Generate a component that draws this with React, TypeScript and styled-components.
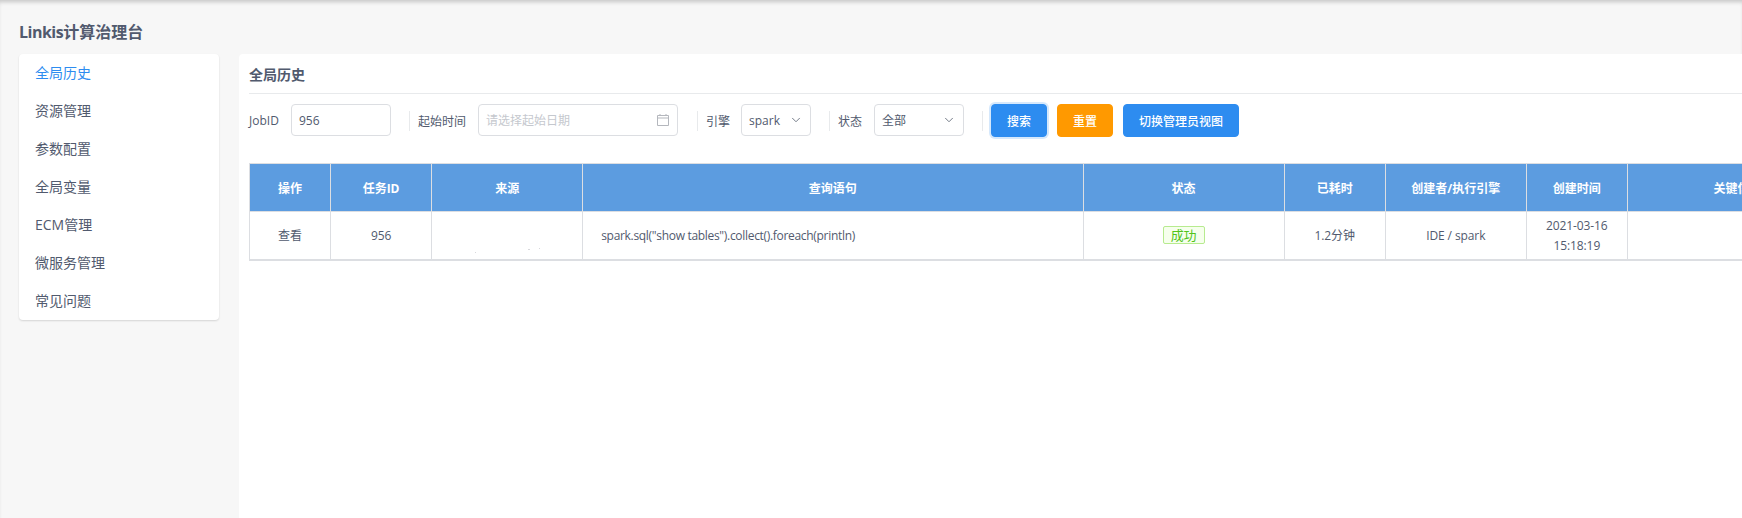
import React from "react";
import styled, { createGlobalStyle } from "styled-components";
import { ChevronDown } from "lucide-react";

const Global = createGlobalStyle`
  html, body { margin: 0; padding: 0; height: 100%; overflow: hidden; background: #f7f7f7; }
  body { font-family: "Open Sans", "Noto Sans CJK SC", sans-serif; color: #515a6e; font-size: 12px; }
  #root { height: 100%; }
`;

const Page = styled.div`
  width: 1742px;
  height: 518px;
  overflow: hidden;
  position: relative;
  background: #f7f7f7;
  box-shadow: inset 0 4px 4px -2px rgba(0, 0, 0, 0.2);
  padding: 22px 0 0 19px;
  box-sizing: border-box;
`;
const Title = styled.h1`
  margin: 0;
  height: 20px;
  line-height: 20px;
  font-size: 16px;
  font-weight: 700;
  color: #515a6e;
`;
const TitleLatin = styled.span`
  letter-spacing: -0.5px;
`;
const Body = styled.div`
  display: flex;
  align-items: flex-start;
  gap: 20px;
  margin-top: 12px;
`;
const Side = styled.nav`
  width: 200px;
  flex: none;
  background: #fff;
  border-radius: 4px;
  box-shadow: 0 1px 2px rgba(0, 0, 0, 0.14);
  display: flex;
  flex-direction: column;
`;
const SideItem = styled.a<{ $active?: boolean }>`
  display: block;
  height: 38px;
  line-height: 38px;
  padding-left: 16px;
  font-size: 14px;
  color: ${(p) => (p.$active ? "#2d8cf0" : "#515a6e")};
`;
const Panel = styled.main`
  flex: 1;
  height: 470px;
  background: #fff;
  border-radius: 4px 0 0 0;
  padding: 0 0 0 10px;
  min-width: 0;
`;
const Heading = styled.h2`
  margin: 0;
  height: 39px;
  line-height: 41px;
  font-size: 14px;
  font-weight: 700;
  color: #515a6e;
  border-bottom: 1px solid #e8eaec;
`;
const Form = styled.form`
  display: flex;
  align-items: center;
  margin-top: 10px;
  height: 33px;
`;
const Label = styled.label<{ $w: number }>`
  width: ${(p) => p.$w}px;
  flex: none;
  font-size: 12px;
  color: #515a6e;
`;
const Input = styled.div<{ $w: number }>`
  width: ${(p) => p.$w}px;
  height: 32px;
  align-self: flex-start;
  flex: none;
  box-sizing: border-box;
  border: 1px solid #dcdee2;
  border-radius: 4px;
  padding: 0 7px;
  display: flex;
  align-items: center;
  justify-content: space-between;
  color: #515a6e;
  font-size: 12px;
`;
const Placeholder = styled.span`
  color: #c5c8ce;
`;
const Sep = styled.i<{ $l: number; $r: number }>`
  flex: none;
  width: 1px;
  height: 20px;
  background: #e8eaec;
  margin: 0 ${(p) => p.$r}px 0 ${(p) => p.$l}px;
`;
const Btn = styled.button<{ $bg: string; $w: number; $ring?: boolean; $ml: number }>`
  flex: none;
  width: ${(p) => p.$w}px;
  height: 33px;
  margin-left: ${(p) => p.$ml}px;
  padding: 0;
  border: 1px solid ${(p) => p.$bg};
  border-radius: 4px;
  background: ${(p) => p.$bg};
  color: #fff;
  font: inherit;
  font-size: 12px;
  font-weight: 500;
  box-shadow: ${(p) => (p.$ring ? "0 0 0 2px rgba(45,140,240,.2)" : "none")};
`;
const TableWrap = styled.div`
  margin-top: 26px;
  overflow: hidden;
`;
const Table = styled.table`
  border-collapse: collapse;
  table-layout: fixed;
  width: 1599px;
  border-left: 1px solid #dcdee2;
  border-top: 1px solid #dcdee2;
  border-bottom: 2px solid #dcdee2;
`;
const Th = styled.th`
  height: 47px;
  padding: 0;
  background: #5c9ce0;
  color: #fff;
  font-size: 12px;
  font-weight: 700;
  text-align: center;
  border-right: 1px solid #dcdee2;
  border-bottom: 1px solid #dcdee2;
`;
const Td = styled.td<{ $left?: boolean }>`
  position: relative;
  height: 47px;
  padding: ${(p) => (p.$left ? "0 0 0 18px" : "0")};
  text-align: ${(p) => (p.$left ? "left" : "center")};
  letter-spacing: ${(p) => (p.$left ? "-0.31px" : "-0.1px")};
  font-size: 12px;
  line-height: 20px;
  color: #515a6e;
  border-right: 1px solid #dcdee2;
`;
const Specks = styled.svg`
  position: absolute;
  left: 0;
  top: 0;
`;
const Tag = styled.span`
  display: inline-block;
  box-sizing: border-box;
  width: 42px;
  height: 18px;
  line-height: 16px;
  font-size: 13px;
  color: #52c41a;
  background: #f6ffed;
  border: 1px solid #b7eb8f;
  border-radius: 2px;
`;

const cols = [81, 101, 151, 500, 201, 101, 141, 101, 220];
const heads = ["操作", "任务ID", "来源", "查询语句", "状态", "已耗时", "创建者/执行引擎", "创建时间", "关键信息"];
const menu = ["全局历史", "资源管理", "参数配置", "全局变量", "ECM管理", "微服务管理", "常见问题"];

export default function App() {
  return (
    <Page>
      <Global />
      <Title><TitleLatin>Linkis</TitleLatin>计算治理台</Title>
      <Body>
        <Side>
          {menu.map((m, i) => (
            <SideItem key={m} $active={i === 0}>{m}</SideItem>
          ))}
        </Side>
        <Panel>
          <Heading>全局历史</Heading>
          <Form>
            <Label $w={42}>JobID</Label>
            <Input $w={100}>956</Input>
            <Sep $l={18} $r={8} />
            <Label $w={60}>起始时间</Label>
            <Input $w={200}>
              <Placeholder>请选择起始日期</Placeholder>
              <svg width="14" height="14" viewBox="0 0 14 14" fill="none" stroke="#b4b7bd" strokeWidth="1">
                <path d="M1.5 2.5h11v10h-11zM1.5 5h11M4 1v2M10 1v2" />
              </svg>
            </Input>
            <Sep $l={19} $r={8} />
            <Label $w={35}>引擎</Label>
            <Input $w={70}>
              spark
              <ChevronDown size={14} color="#6b7280" strokeWidth={1.6} />
            </Input>
            <Sep $l={18} $r={8} />
            <Label $w={36}>状态</Label>
            <Input $w={90}>
              全部
              <ChevronDown size={14} color="#6b7280" strokeWidth={1.6} />
            </Input>
            <Sep $l={18} $r={0} />
            <Btn $bg="#2d8cf0" $w={56} $ml={8} $ring>搜索</Btn>
            <Btn $bg="#ff9900" $w={56} $ml={10}>重置</Btn>
            <Btn $bg="#2d8cf0" $w={116} $ml={10}>切换管理员视图</Btn>
          </Form>
          <TableWrap>
            <Table>
              <colgroup>
                {cols.map((c, i) => (
                  <col key={i} style={{ width: c }} />
                ))}
              </colgroup>
              <thead>
                <tr>
                  {heads.map((h) => (
                    <Th key={h}>{h}</Th>
                  ))}
                </tr>
              </thead>
              <tbody>
                <tr>
                  <Td>查看</Td>
                  <Td>956</Td>
                  <Td>
                    <Specks width="150" height="47" viewBox="0 0 150 47" fill="#d8d8dc">
                      <rect x="43" y="40" width="1" height="1" />
                      <rect x="96" y="37" width="2" height="1" />
                      <rect x="107" y="36" width="1" height="1" />
                    </Specks>
                  </Td>
                  <Td $left>spark.sql("show tables").collect().foreach(println)</Td>
                  <Td><Tag>成功</Tag></Td>
                  <Td>1.2分钟</Td>
                  <Td>IDE / spark</Td>
                  <Td>2021-03-16<br />15:18:19</Td>
                  <Td />
                </tr>
              </tbody>
            </Table>
          </TableWrap>
        </Panel>
      </Body>
    </Page>
  );
}
